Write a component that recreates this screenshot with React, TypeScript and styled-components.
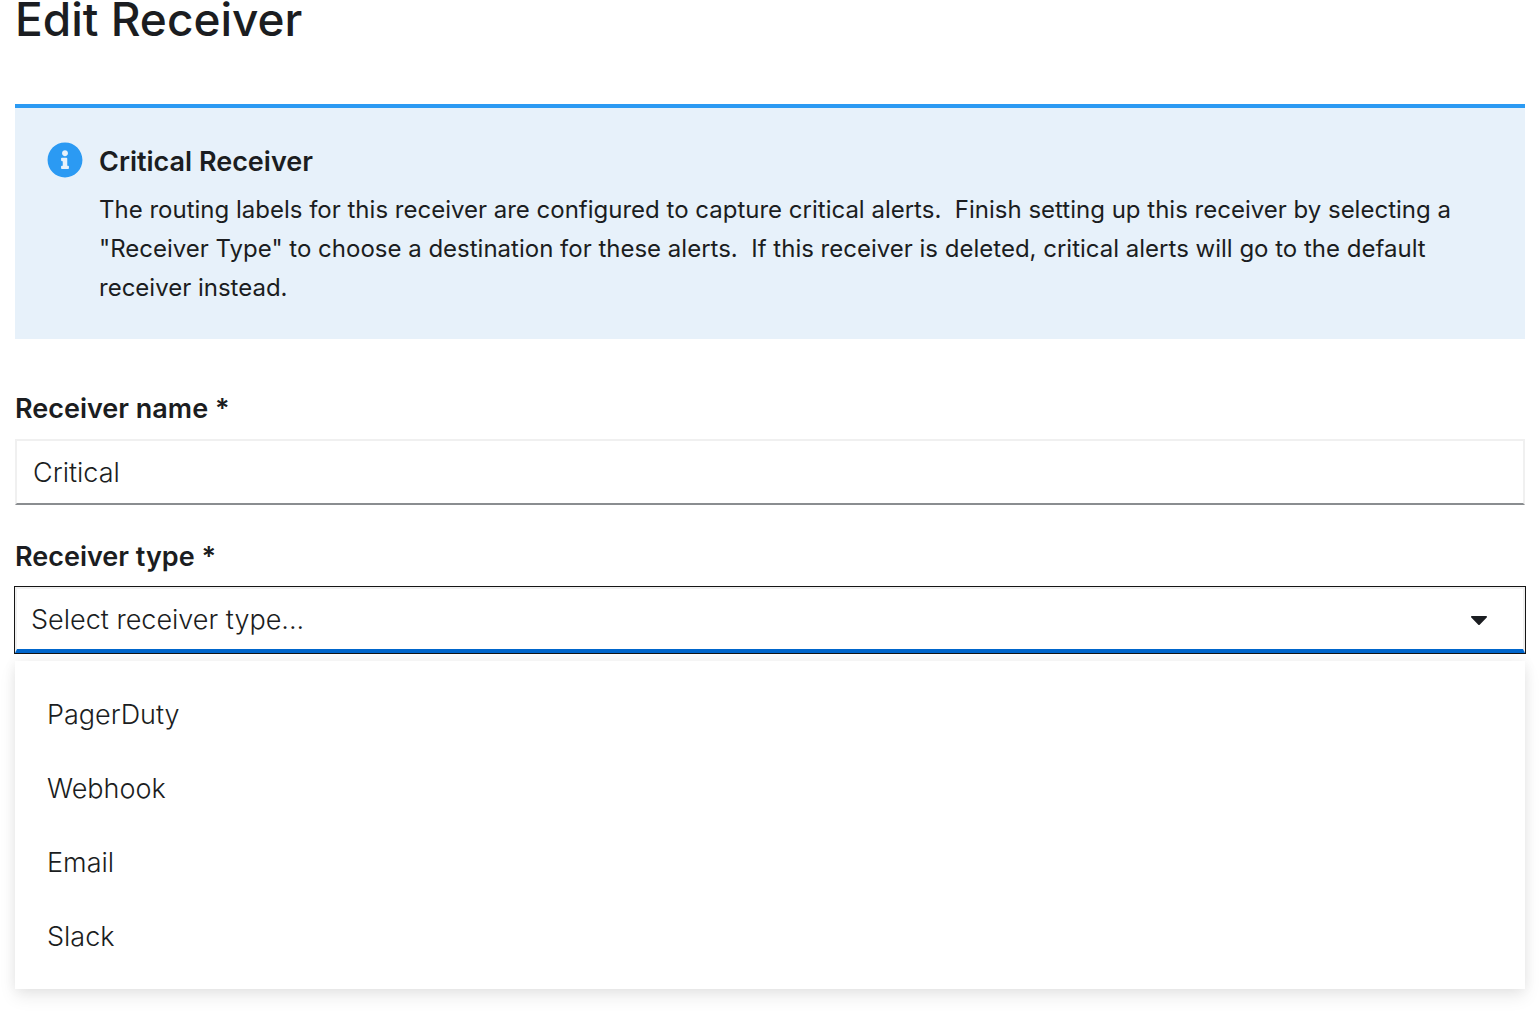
import React, { useState } from 'react';
import styled, { createGlobalStyle } from 'styled-components';

const GlobalStyle = createGlobalStyle`
  *, *::before, *::after { box-sizing: border-box; }
  body {
    margin: 0;
    background: #fff;
    color: #1b1d21;
    font-family: Inter, "Liberation Sans", sans-serif;
    font-size: 27px;
    font-weight: 300;
    line-height: 39px;
  }
`;

const Page = styled.main`
  min-height: 100vh;
  padding: 0 15px 24px;
`;

const Title = styled.h1`
  margin: 0 0 66px;
  font-size: 46px;
  font-weight: 500;
  line-height: 38px;
`;

const Alert = styled.section`
  display: flex;
  align-items: flex-start;
  gap: 16px;
  margin-bottom: 48px;
  padding: 32px;
  border-top: 4px solid #2b9af3;
  background: #e7f1fa;
`;

const AlertIcon = styled.svg`
  flex: none;
  width: 36px;
  height: 36px;
  margin-top: 2px;
`;

const AlertTitle = styled.h2`
  margin: 0 0 6px;
  font-size: 27px;
  font-weight: 600;
  line-height: 44px;
`;

const AlertText = styled.p`
  margin: 0;
  white-space: pre-wrap;
  font-size: 24px;
  font-weight: 400;
`;

const Form = styled.form`
  display: flex;
  flex-direction: column;
  gap: 30px;
`;

const Field = styled.div`
  display: flex;
  flex-direction: column;
  gap: 8px;
`;

const Label = styled.label`
  font-size: 27px;
  font-weight: 600;
  line-height: 44px;
`;

const TextInput = styled.input`
  width: 100%;
  height: 66px;
  padding: 0 16px;
  border: 2px solid #f0f0f0;
  border-bottom-color: #8a8d90;
  border-radius: 0;
  outline: none;
  background: #fff;
  color: inherit;
  font: inherit;
`;

const SelectWrap = styled.div`
  position: relative;
`;

const Select = styled.select`
  display: block;
  width: 100%;
  height: 66px;
  padding: 0 64px 0 14px;
  border: 2px solid #f0f0f0;
  border-bottom: 4px solid #06c;
  border-radius: 0;
  outline: 1px solid #151515;
  background: #fff;
  color: inherit;
  font: inherit;
  appearance: none;
`;

const Caret = styled.svg`
  position: absolute;
  top: 29px;
  right: 38px;
  width: 16px;
  height: 10px;
  pointer-events: none;
`;

const Menu = styled.ul`
  position: absolute;
  top: calc(100% + 8px);
  left: 0;
  right: 0;
  margin: 0;
  padding: 16px 0;
  list-style: none;
  background: #fff;
  box-shadow: 0 8px 16px rgba(3, 3, 3, 0.08), 0 0 12px rgba(3, 3, 3, 0.06);
`;

const MenuButton = styled.button`
  display: block;
  width: 100%;
  height: 74px;
  padding: 0 32px;
  border: 0;
  background: transparent;
  color: inherit;
  font: inherit;
  text-align: left;
  cursor: pointer;

  &:hover {
    background: #f0f0f0;
  }
`;

const receiverTypes = ['PagerDuty', 'Webhook', 'Email', 'Slack'];

function InfoIcon() {
  return (
    <AlertIcon viewBox="0 0 512 512" aria-hidden="true">
      <path
        fill="#2b9af3"
        d="M256 8C119.043 8 8 119.083 8 256c0 136.997 111.043 248 248 248s248-111.003 248-248C504 119.083 392.957 8 256 8zm0 110c23.196 0 42 18.804 42 42s-18.804 42-42 42-42-18.804-42-42 18.804-42 42-42zm56 254c0 6.627-5.373 12-12 12h-88c-6.627 0-12-5.373-12-12v-24c0-6.627 5.373-12 12-12h12v-64h-12c-6.627 0-12-5.373-12-12v-24c0-6.627 5.373-12 12-12h64c6.627 0 12 5.373 12 12v100h12c6.627 0 12 5.373 12 12v24z"
      />
    </AlertIcon>
  );
}

function ReceiverTypeSelect() {
  const [value, setValue] = useState('');
  const [open, setOpen] = useState(true);

  return (
    <SelectWrap>
      <Select
        id="receiver-type"
        value={value}
        required
        onChange={(event) => setValue(event.target.value)}
        onMouseDown={(event) => {
          event.preventDefault();
          setOpen(!open);
        }}
      >
        <option value="">Select receiver type...</option>
        {receiverTypes.map((type) => (
          <option key={type} value={type}>{type}</option>
        ))}
      </Select>
      <Caret viewBox="0 0 16 10" aria-hidden="true">
        <path fill="#1b1d21" d="M1 0h14c.9 0 1.300 1 .7 1.600L8.700 8.700a1 1 0 0 1-1.400 0L.3 1.600C-.3 1 .1 0 1 0z" />
      </Caret>
      {open && (
        <Menu>
          {receiverTypes.map((type) => (
            <li key={type}>
              <MenuButton
                type="button"
                onClick={() => {
                  setValue(type);
                  setOpen(false);
                }}
              >
                {type}
              </MenuButton>
            </li>
          ))}
        </Menu>
      )}
    </SelectWrap>
  );
}

export default function App() {
  return (
    <>
      <GlobalStyle />
      <Page>
        <Title>Edit Receiver</Title>
        <Alert>
          <InfoIcon />
          <div>
            <AlertTitle>Critical Receiver</AlertTitle>
            <AlertText>
              {'The routing labels for this receiver are configured to capture critical alerts.  Finish setting up this receiver by selecting a "Receiver Type" to choose a destination for these alerts.  If this receiver is deleted, critical alerts will go to the default receiver instead.'}
            </AlertText>
          </div>
        </Alert>
        <Form>
          <Field>
            <Label htmlFor="receiver-name">Receiver name *</Label>
            <TextInput id="receiver-name" type="text" defaultValue="Critical" required />
          </Field>
          <Field>
            <Label htmlFor="receiver-type">Receiver type *</Label>
            <ReceiverTypeSelect />
          </Field>
        </Form>
      </Page>
    </>
  );
}
